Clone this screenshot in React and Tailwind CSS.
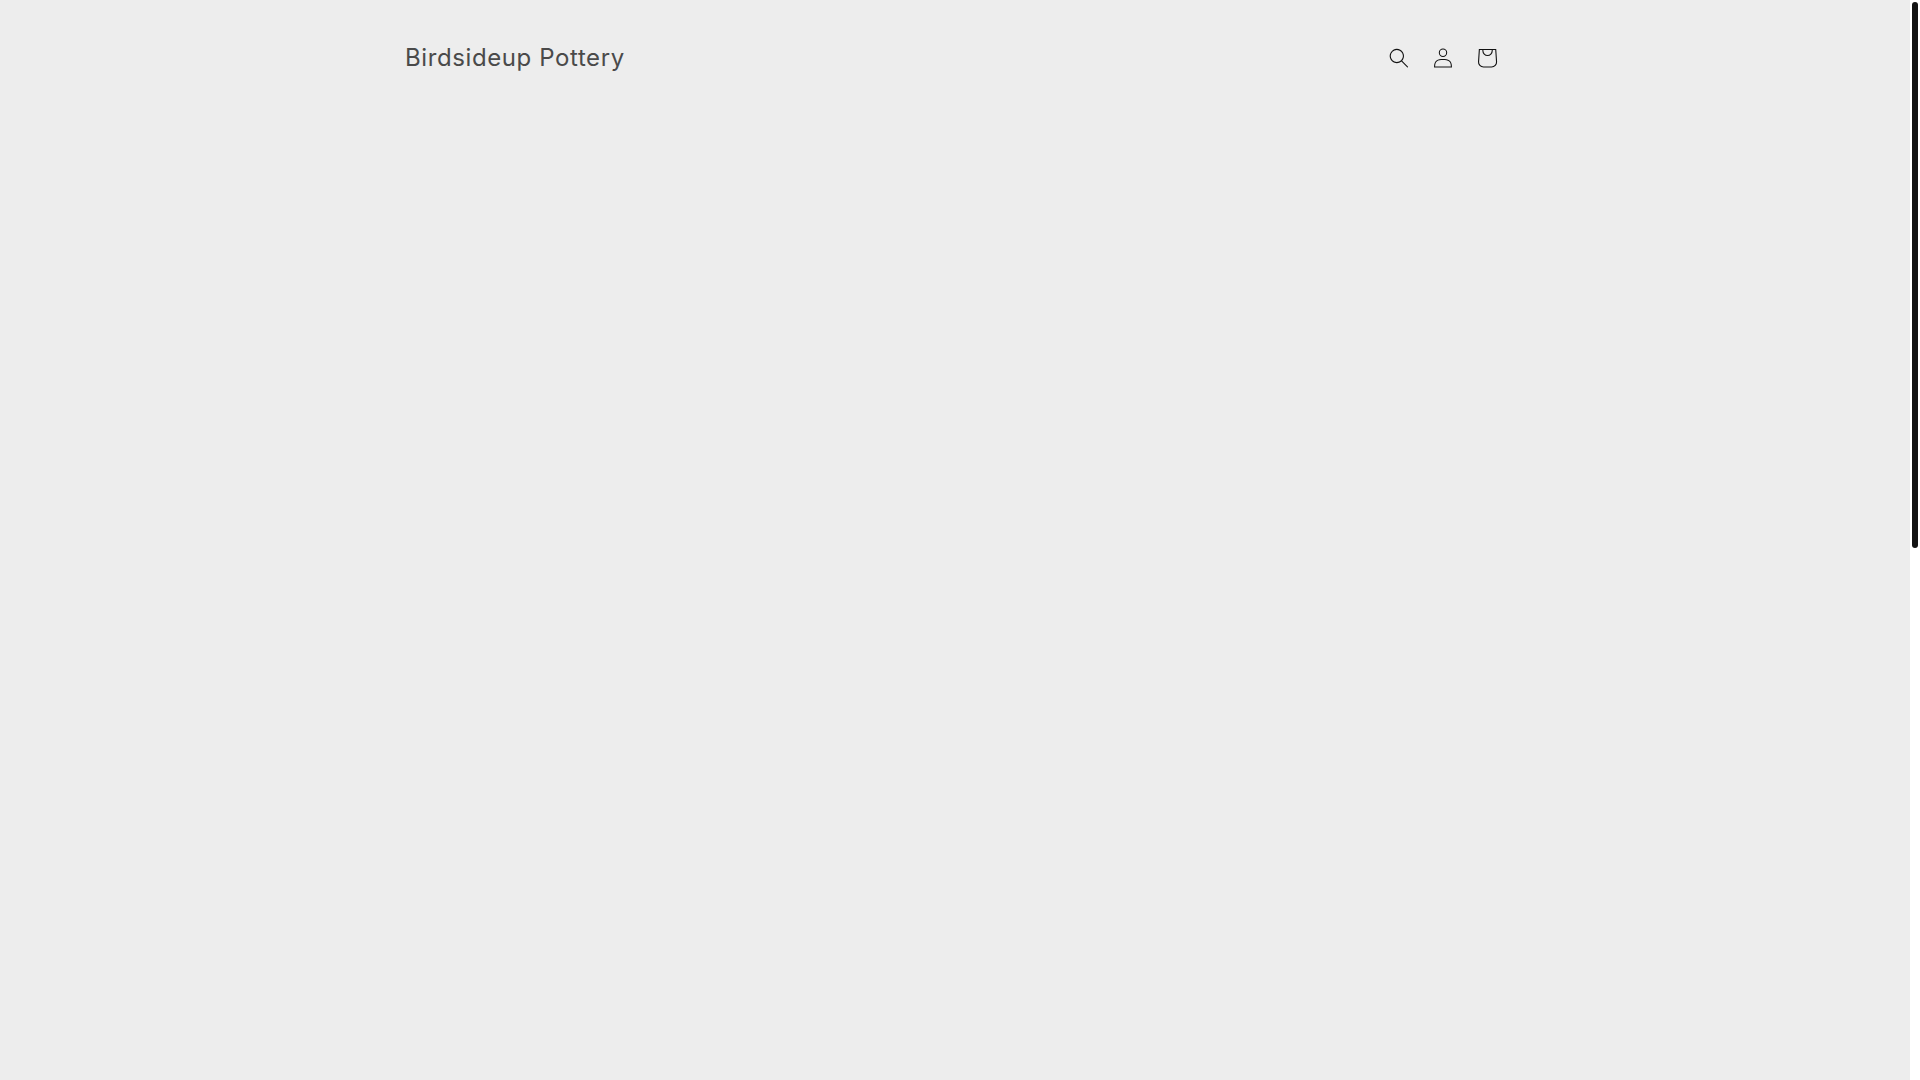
const SearchIcon = () => (
  <svg className="w-5 h-5" viewBox="0 0 18 19" fill="currentColor" fillRule="evenodd" aria-hidden="true">
    <path d="M11.03 11.68A5.784 5.784 0 112.85 3.5a5.784 5.784 0 018.18 8.18zm.26 1.12a6.78 6.78 0 11.72-.7l5.4 5.4a.5.5 0 11-.71.7l-5.41-5.4z" />
  </svg>
);

const AccountIcon = () => (
  <svg className="w-5 h-5" viewBox="0 0 18 19" fill="currentColor" fillRule="evenodd" aria-hidden="true">
    <path d="M6 4.5a3 3 0 116 0 3 3 0 01-6 0zm3-4a4 4 0 100 8 4 4 0 000-8zm5.58 12.15c1.12.83 1.83 2.24 1.91 4.85H1.51c.08-2.6.79-4.03 1.91-4.85C4.66 11.75 6.5 11.5 9 11.5s4.35.26 5.58 1.15zM9 10.5c-2.5 0-4.65.24-6.17 1.35C1.27 12.98.5 14.93.5 18v.5h17V18c0-3.07-.77-5.02-2.33-6.15-1.52-1.1-3.67-1.35-6.17-1.35z" />
  </svg>
);

const CartIcon = () => (
  <svg className="w-11 h-11" viewBox="0 0 40 40" fill="currentColor" fillRule="evenodd" aria-hidden="true">
    <path d="M15.75 11.8h-3.16l-.77 11.6a5 5 0 004.99 5.34h7.38a5 5 0 004.99-5.33L28.4 11.8zm0 1h-2.22l-.71 10.67a4 4 0 003.99 4.27h7.38a4 4 0 004-4.27l-.72-10.67h-2.22v.63a4.75 4.75 0 11-9.5 0zm8.5 0h-7.5v.63a3.75 3.75 0 107.5 0z" />
  </svg>
);

const Header = () => (
  <header className="max-w-[1200px] mx-auto px-[50px] py-9 flex items-center justify-between">
    <a
      href="/"
      className="text-2xl leading-8 tracking-wide text-[#4a4a4a] whitespace-nowrap"
    >
      Birdsideup Pottery
    </a>
    <div className="-mr-1 flex items-center text-[#121212]">
      <button type="button" aria-label="Search" className="w-11 h-11 flex items-center justify-center">
        <SearchIcon />
      </button>
      <a href="/account" aria-label="Log in" className="w-11 h-11 flex items-center justify-center">
        <AccountIcon />
      </a>
      <a href="/cart" aria-label="Cart" className="w-11 h-11 flex items-center justify-center">
        <CartIcon />
      </a>
    </div>
  </header>
);

const ScrollTrack = () => (
  <div className="w-[10px] shrink-0 bg-white p-[2px]" aria-hidden="true">
    <div className="h-[546px] w-[6px] rounded-[3px] bg-[#121212]" />
  </div>
);

const App = () => {
  return (
    <div className="h-screen flex bg-[#ededed] font-['Inter',sans-serif]">
      <main className="flex-1 min-w-0">
        <Header />
      </main>
      <ScrollTrack />
    </div>
  );
};

export default App;
